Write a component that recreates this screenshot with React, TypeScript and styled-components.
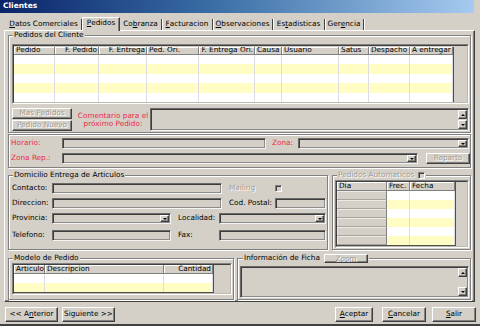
import React from "react";
import styled, { createGlobalStyle, css } from "styled-components";

const FACE = "#d4d0c8";
const SHADOW = "#808080";
const DARK = "#404040";
const HI = "#ffffff";
const YELLOW = "#fffcc4";
const RED = "#ea2c45";
const DIS = "#a09c96";
const LINE = "#dcdce4";

const GlobalStyle = createGlobalStyle`
  * { box-sizing: border-box; }
  html, body { margin: 0; padding: 0; background: ${FACE}; }
  body {
    font-family: "DejaVu Sans", Verdana, sans-serif;
    font-size: 7.3px;
    line-height: 1.1;
    color: #000;
  }
  u { text-decoration: underline; text-underline-offset: 1px; }
`;

const Win = styled.div`
  width: 480px;
  height: 326px;
  background: ${FACE};
  display: flex;
  flex-direction: column;
  border-bottom: 2px solid ${DARK};
  overflow: hidden;
`;

const TitleBar = styled.div`
  height: 13px;
  width: 474px;
  flex: none;
  background: linear-gradient(to right, #0a246a, #3a6ea5 45%, #a6caf0);
  color: #fff;
  font-weight: bold;
  font-size: 7.5px;
  display: flex;
  align-items: center;
  padding-left: 3px;
`;

const TabRow = styled.div`
  display: flex;
  align-items: flex-end;
  height: 13px;
  flex: none;
  margin-top: 4px;
  padding-left: 6px;
  position: relative;
  z-index: 1;
`;

const Tab = styled.div<{ $w: number; $active?: boolean }>`
  width: ${(p) => p.$w}px;
  height: ${(p) => (p.$active ? 14 : 11)}px;
  flex: none;
  display: flex;
  align-items: center;
  justify-content: center;
  white-space: nowrap;
  border-right: 1px solid ${DARK};
  box-shadow: 1px 0 0 ${HI};
  ${(p) =>
    p.$active &&
    css`
      background: ${FACE};
      border-left: 1px solid ${HI};
      border-top: 1px solid ${HI};
      margin-bottom: -1px;
      padding-bottom: 2px;
      box-shadow: inset -1px 0 0 ${SHADOW};
    `}
`;

const Panel = styled.div`
  margin-left: 4px;
  width: 471px;
  height: 272px;
  flex: none;
  border: 1px solid;
  border-color: ${HI} ${DARK} ${DARK} ${HI};
  box-shadow: inset -1px -1px 0 ${SHADOW};
  padding: 0 2px 0 3px;
  display: flex;
  flex-direction: column;
`;

const Group = styled.div<{ $w: number; $h: number; $mt?: number; $ml?: number }>`
  position: relative;
  width: ${(p) => p.$w}px;
  height: ${(p) => p.$h}px;
  margin-top: ${(p) => p.$mt ?? 0}px;
  margin-left: ${(p) => p.$ml ?? 0}px;
  flex: none;
  border: 1px solid ${SHADOW};
  box-shadow: inset 1px 1px 0 ${HI}, 1px 1px 0 ${HI};
  display: flex;
  flex-direction: column;
`;

const Legend = styled.div<{ $left?: number; $dis?: boolean }>`
  position: absolute;
  top: -5px;
  left: ${(p) => p.$left ?? 4}px;
  height: 9px;
  padding: 0 1px;
  background: ${FACE};
  display: flex;
  align-items: center;
  gap: 4px;
  white-space: nowrap;
  color: ${(p) => (p.$dis ? DIS : "#000")};
  text-shadow: ${(p) => (p.$dis ? `1px 1px 0 ${HI}` : "none")};
`;

const SectionRow = styled.div<{ $mt: number; $h: number }>`
  display: flex;
  margin-top: ${(p) => p.$mt}px;
  height: ${(p) => p.$h}px;
  flex: none;
`;

/* ---------- grid ---------- */
const GridFrame = styled.div<{ $w: number; $h: number; $ml: number; $mt: number }>`
  width: ${(p) => p.$w}px;
  height: ${(p) => p.$h}px;
  margin-left: ${(p) => p.$ml}px;
  margin-top: ${(p) => p.$mt}px;
  flex: none;
  border: 1px solid;
  border-color: ${SHADOW} ${HI} ${HI} ${SHADOW};
  background: ${FACE};
`;

const GridWell = styled.div`
  height: 100%;
  border: 1px solid;
  border-color: ${DARK} #bdb9b1 #bdb9b1 ${DARK};
  overflow: hidden;
`;

const Table = styled.div`
  display: inline-flex;
  flex-direction: column;
  border-right: 1px solid #505050;
  border-bottom: 1px solid #505050;
`;

const TRow = styled.div`
  display: flex;
`;

const HeadCell = styled.div<{ $w: number; $h: number; $align: string }>`
  width: ${(p) => p.$w}px;
  height: ${(p) => p.$h}px;
  flex: none;
  background: ${FACE};
  border-right: 1px solid ${SHADOW};
  border-bottom: 1px solid ${SHADOW};
  box-shadow: inset 1px 1px 0 ${HI};
  display: flex;
  align-items: center;
  justify-content: ${(p) => (p.$align === "right" ? "flex-end" : "flex-start")};
  padding: 0 1px 0 2px;
  white-space: nowrap;
  overflow: hidden;
`;

const Cell = styled.div<{ $w: number; $h: number; $bg: string; $fixed?: boolean }>`
  width: ${(p) => p.$w}px;
  height: ${(p) => p.$h}px;
  flex: none;
  background: ${(p) => p.$bg};
  border-right: 1px solid ${LINE};
  ${(p) =>
    p.$fixed &&
    css`
      border-right: 1px solid ${SHADOW};
      border-bottom: 1px solid #a9a59e;
      box-shadow: inset 1px 1px 0 #ecebe7;
    `}
`;

type Col = { label: string; w: number; align?: "left" | "right"; fixed?: boolean };

function Grid(props: {
  w: number;
  h: number;
  ml: number;
  mt: number;
  head: number;
  cols: Col[];
  rows: number[];
}) {
  const { w, h, ml, mt, head, cols, rows } = props;
  return (
    <GridFrame $w={w} $h={h} $ml={ml} $mt={mt}>
      <GridWell>
        <Table>
          <TRow>
            {cols.map((c, i) => (
              <HeadCell key={i} $w={c.w} $h={head} $align={c.align ?? "left"}>
                {c.label}
              </HeadCell>
            ))}
          </TRow>
          {rows.map((rh, r) => (
            <TRow key={r}>
              {cols.map((c, i) => (
                <Cell
                  key={i}
                  $w={c.w}
                  $h={rh}
                  $fixed={c.fixed}
                  $bg={c.fixed ? FACE : r % 2 ? YELLOW : "#fff"}
                />
              ))}
            </TRow>
          ))}
        </Table>
      </GridWell>
    </GridFrame>
  );
}

/* ---------- controls ---------- */
const Field = styled.div<{ $w: number; $h?: number; $ml?: number; $mt?: number }>`
  width: ${(p) => p.$w}px;
  height: ${(p) => p.$h ?? 11}px;
  margin-left: ${(p) => p.$ml ?? 0}px;
  margin-top: ${(p) => p.$mt ?? 0}px;
  flex: none;
  background: ${FACE};
  border: 1px solid;
  border-color: #6a6a6a #f4f4f4 #f4f4f4 #6a6a6a;
  box-shadow: inset 1px 1px 0 #3c3c3c, inset -1px -1px 0 #8c8c8c;
  display: flex;
  justify-content: flex-end;
  align-items: stretch;
  padding: 1px;
`;

const ArrowBtn = styled.div<{ $h?: number }>`
  width: 9px;
  height: ${(p) => (p.$h ? `${p.$h}px` : "auto")};
  flex: none;
  background: ${FACE};
  border: 1px solid;
  border-color: ${HI} ${DARK} ${DARK} ${HI};
  box-shadow: inset -1px -1px 0 ${SHADOW};
  display: flex;
  align-items: center;
  justify-content: center;
`;

const Tri = styled.span<{ $up?: boolean }>`
  width: 0;
  height: 0;
  border-left: 2px solid transparent;
  border-right: 2px solid transparent;
  ${(p) =>
    p.$up
      ? css`border-bottom: 2px solid #000;`
      : css`border-top: 2px solid #000;`}
`;

const ScrollCol = styled.div<{ $h: number }>`
  height: ${(p) => p.$h}px;
  flex: none;
  display: grid;
  grid-template-rows: 9px 1fr 9px;
`;

const Btn = styled.button<{ $w: number; $h: number; $ml?: number }>`
  width: ${(p) => p.$w}px;
  height: ${(p) => p.$h}px;
  margin-left: ${(p) => p.$ml ?? 0}px;
  flex: none;
  padding: 0;
  font: inherit;
  color: #000;
  background: ${FACE};
  border: 1px solid;
  border-color: ${HI} ${DARK} ${DARK} ${HI};
  box-shadow: inset -1px -1px 0 ${SHADOW};
  display: flex;
  align-items: center;
  justify-content: center;
  white-space: nowrap;
  &:disabled {
    color: ${DIS};
    text-shadow: 1px 1px 0 ${HI};
  }
`;

const Check = styled.span<{ $ml?: number }>`
  width: 7px;
  height: 7px;
  margin-left: ${(p) => p.$ml ?? 0}px;
  flex: none;
  background: ${FACE};
  border: 1px solid;
  border-color: ${SHADOW} ${HI} ${HI} ${SHADOW};
  box-shadow: inset 1px 1px 0 ${DARK};
`;

const Lbl = styled.span<{ $w: number; $ml?: number; $red?: boolean; $dis?: boolean }>`
  width: ${(p) => p.$w}px;
  margin-left: ${(p) => p.$ml ?? 0}px;
  flex: none;
  white-space: nowrap;
  color: ${(p) => (p.$red ? RED : p.$dis ? DIS : "#000")};
  text-shadow: ${(p) => (p.$dis ? `1px 1px 0 ${HI}` : "none")};
`;

const FormRow = styled.div<{ $mt: number; $ml?: number }>`
  display: flex;
  align-items: center;
  height: 11px;
  flex: none;
  margin-top: ${(p) => p.$mt}px;
  margin-left: ${(p) => p.$ml ?? 0}px;
`;

const CommentRow = styled.div`
  display: flex;
  align-items: stretch;
  height: 23px;
  margin-top: 4px;
  margin-left: 3px;
  flex: none;
`;

const BtnCol = styled.div`
  display: flex;
  flex-direction: column;
  justify-content: space-between;
  width: 60px;
  flex: none;
`;

const CommentLbl = styled.div`
  width: 70px;
  margin-left: 6px;
  flex: none;
  color: ${RED};
  display: flex;
  flex-direction: column;
  align-items: center;
  justify-content: center;
  text-align: center;
  line-height: 8px;
  white-space: nowrap;
`;

const BottomBar = styled.div`
  display: flex;
  align-items: center;
  height: 15px;
  margin-top: 5px;
  padding-right: 4px;
  flex: none;
`;

const Spacer = styled.div`
  flex: 1;
`;

function Select({ w, ml }: { w: number; ml?: number }) {
  return (
    <Field $w={w} $ml={ml}>
      <ArrowBtn>
        <Tri />
      </ArrowBtn>
    </Field>
  );
}

function Memo({ w, h, ml, mt }: { w: number; h: number; ml: number; mt?: number }) {
  return (
    <Field $w={w} $h={h} $ml={ml} $mt={mt}>
      <ScrollCol $h={h - 4}>
        <ArrowBtn>
          <Tri $up />
        </ArrowBtn>
        <span />
        <ArrowBtn>
          <Tri />
        </ArrowBtn>
      </ScrollCol>
    </Field>
  );
}

const TABS: { w: number; node: React.ReactNode; active?: boolean }[] = [
  { w: 76, node: <><u>D</u>atos Comerciales</> },
  { w: 38, node: <><u>P</u>edidos</>, active: true },
  { w: 42, node: <>Co<u>b</u>ranza</> },
  { w: 51, node: <><u>F</u>acturacion</> },
  { w: 60, node: <><u>O</u>bservaciones</> },
  { w: 52, node: <>Es<u>t</u>adisticas</> },
  { w: 39, node: <>Ger<u>e</u>ncia</> },
];

const PEDIDOS_COLS: Col[] = [
  { label: "Pedido", w: 41 },
  { label: "F. Pedido", w: 44, align: "right" },
  { label: "F. Entrega", w: 48, align: "right" },
  { label: "Ped. Ori.", w: 52 },
  { label: "F. Entrega Ori.", w: 56, align: "right" },
  { label: "Causa", w: 27 },
  { label: "Usuario", w: 57 },
  { label: "Satus", w: 30 },
  { label: "Despacho", w: 41 },
  { label: "A entregar", w: 43 },
];

const AUTO_COLS: Col[] = [
  { label: "Dia", w: 50, fixed: true },
  { label: "Frec.", w: 23 },
  { label: "Fecha", w: 45 },
];

const MODELO_COLS: Col[] = [
  { label: "Articulo", w: 31 },
  { label: "Descripcion", w: 119 },
  { label: "Cantidad", w: 49, align: "right" },
];

export default function App() {
  return (
    <>
      <GlobalStyle />
      <Win>
        <TitleBar>Clientes</TitleBar>
        <TabRow>
          {TABS.map((t, i) => (
            <Tab key={i} $w={t.w} $active={t.active}>
              {t.node}
            </Tab>
          ))}
        </TabRow>
        <Panel>
          {/* Pedidos del Cliente */}
          <Group $w={463} $h={98} $mt={4}>
            <Legend>Pedidos del Cliente</Legend>
            <Grid w={457} h={60} ml={3} mt={8} head={8} cols={PEDIDOS_COLS} rows={[9, 10, 9, 10, 9]} />
            <CommentRow>
              <BtnCol>
                <Btn $w={60} $h={11} disabled>
                  Mas Pedidos
                </Btn>
                <Btn $w={60} $h={11} disabled>
                  Pedido Nuevo
                </Btn>
              </BtnCol>
              <CommentLbl>
                <span>Comentario para el</span>
                <span>próximo Pedido:</span>
              </CommentLbl>
              <Memo w={319} h={23} ml={2} />
            </CommentRow>
          </Group>

          {/* Horario / Zona */}
          <Group $w={463} $h={34} $mt={1}>
            <FormRow $mt={3} $ml={2}>
              <Lbl $w={51} $red>
                Horario:
              </Lbl>
              <Field $w={204} />
              <Lbl $w={26} $ml={6} $red>
                Zona:
              </Lbl>
              <Select w={171} />
            </FormRow>
            <FormRow $mt={4} $ml={2}>
              <Lbl $w={51} $red>
                Zona Rep.:
              </Lbl>
              <Select w={356} />
              <Btn $w={44} $h={11} $ml={8} disabled>
                Reparto
              </Btn>
            </FormRow>
          </Group>

          <SectionRow $mt={7} $h={75}>
            {/* Domicilio */}
            <Group $w={320} $h={75}>
              <Legend>Domicilio Entrega de Articulos</Legend>
              <FormRow $mt={7} $ml={3}>
                <Lbl $w={40}>Contacto:</Lbl>
                <Field $w={170} />
                <Lbl $w={46} $ml={7} $dis>
                  Mailing
                </Lbl>
                <Check />
              </FormRow>
              <FormRow $mt={4} $ml={3}>
                <Lbl $w={40}>Direccion:</Lbl>
                <Field $w={170} />
                <Lbl $w={46} $ml={7}>
                  Cod. Postal:
                </Lbl>
                <Field $w={51} />
              </FormRow>
              <FormRow $mt={4} $ml={3}>
                <Lbl $w={40}>Provincia:</Lbl>
                <Select w={119} />
                <Lbl $w={41} $ml={7}>
                  Localidad:
                </Lbl>
                <Select w={107} />
              </FormRow>
              <FormRow $mt={6} $ml={3}>
                <Lbl $w={40}>Telefono:</Lbl>
                <Field $w={119} />
                <Lbl $w={41} $ml={7}>
                  Fax:
                </Lbl>
                <Field $w={107} />
              </FormRow>
            </Group>

            {/* Pedidos Automaticos */}
            <Group $w={139} $h={75} $ml={4}>
              <Legend $dis>
                Pedidos Automaticos
                <Check />
              </Legend>
              <Grid w={134} h={68} ml={2} mt={4} head={9} cols={AUTO_COLS} rows={[9, 9, 9, 9, 9, 9]} />
            </Group>
          </SectionRow>

          <SectionRow $mt={8} $h={42}>
            {/* Modelo de Pedido */}
            <Group $w={226} $h={42}>
              <Legend>Modelo de Pedido</Legend>
              <Grid w={220} h={32} ml={3} mt={4} head={9} cols={MODELO_COLS} rows={[9, 9]} />
            </Group>

            {/* Informacion de Ficha */}
            <Group $w={234} $h={42} $ml={3}>
              <Legend $left={5}>
                Información de Ficha
                <Btn $w={44} $h={9} disabled>
                  Zoom
                </Btn>
              </Legend>
              <Memo w={229} h={32} ml={2} mt={7} />
            </Group>
          </SectionRow>
        </Panel>

        <BottomBar>
          <Btn $w={53} $h={15} $ml={5}>
            {"<< A"}
            <u>n</u>
            {"terior"}
          </Btn>
          <Btn $w={53} $h={15} $ml={4}>
            {"Siguiente >>"}
          </Btn>
          <Spacer />
          <Btn $w={38} $h={15}>
            <u>A</u>ceptar
          </Btn>
          <Btn $w={44} $h={15} $ml={9}>
            <u>C</u>ancelar
          </Btn>
          <Btn $w={44} $h={15} $ml={6}>
            <u>S</u>alir
          </Btn>
        </BottomBar>
      </Win>
    </>
  );
}
